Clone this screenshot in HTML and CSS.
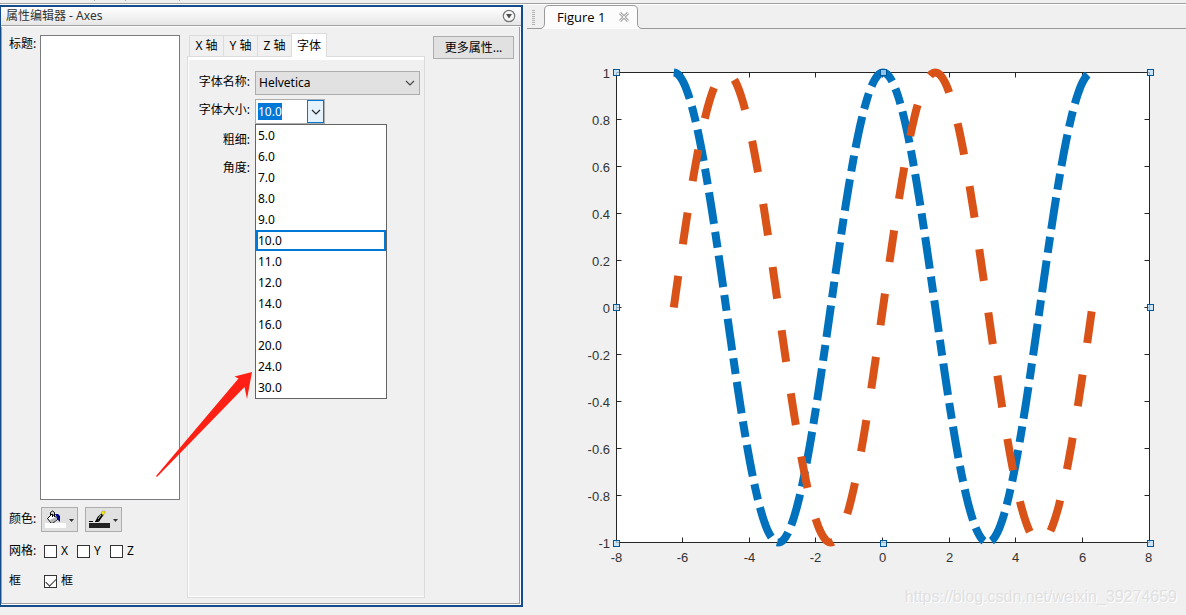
FILE: index.html
```html
<!DOCTYPE html>
<html lang="zh-CN">
<head>
<meta charset="utf-8">
<title>属性编辑器 - Axes</title>
<link rel="stylesheet" href="styles.css">
</head>
<body>
<div class="toolbar-edge"><i></i><i></i><i></i></div>
<main class="workspace">
  <section class="editor">
    <header class="editor-title">
      <h1>属性编辑器 - Axes</h1>
      <button class="round-button" aria-label="菜单">
        <svg width="14" height="14" viewBox="0 0 14 14"><circle cx="7" cy="7" r="5.7" fill="#f6f6f6" stroke="#777" stroke-width="1.2"/><path d="M4 5h6L7 9.5z" fill="#505050"/></svg>
      </button>
    </header>
    <div class="editor-body">
      <div class="general">
        <label class="caption" for="title-text">标题:</label>
        <textarea id="title-text" class="title-text"></textarea>
        <span class="caption row-label">颜色:</span>
        <div class="colour-buttons">
          <button class="colour-button" aria-label="背景颜色">
            <svg width="35" height="23" viewBox="0 0 35 23">
              <path d="M5.500 10.500L10 6l6 5-5 4H9z" fill="#fff" stroke="#000"/>
              <path d="M8 12l6-3 1 2-4 3.500H9z" fill="#b5b5b5"/>
              <path d="M8.500 8V4.500l2-1.500 2 1.500V9M10.500 6v3" fill="none" stroke="#000"/>
              <path d="M13 6h3l2 2v5.500h-1l-2-4z" fill="#00008b"/>
              <path d="M3 15h21v5H3z" fill="#fff"/><path d="M27 11h5l-2.500 3z" fill="#333"/>
            </svg>
          </button>
          <button class="colour-button" aria-label="线条颜色">
            <svg width="35" height="23" viewBox="0 0 35 23">
              <path d="M3 13.500h4M9 13.500h3l2-1" fill="none" stroke="#000"/>
              <path d="M9.500 13l2-4L16 5l2 1.500-4 5.500-3 1.500z" fill="#000"/><path d="M12 11l3-4" stroke="#fff" stroke-width=".8"/>
              <path d="M15 5l1.500-2H19v2l-2 2.500z" fill="#f3ea10" stroke="#777" stroke-width=".4"/>
              <path d="M3 15h21v5H3z" fill="#222"/><path d="M27 11h5l-2.500 3z" fill="#333"/>
            </svg>
          </button>
        </div>
        <span class="caption row-label">网格:</span>
        <div class="checks">
          <label><input type="checkbox">X</label>
          <label><input type="checkbox">Y</label>
          <label><input type="checkbox">Z</label>
        </div>
        <span class="caption row-label">框</span>
        <div class="checks">
          <label><input type="checkbox" checked>框</label>
        </div>
      </div>

      <div class="tabs">
        <div class="tab-row" role="tablist">
          <button role="tab">X 轴</button><button role="tab">Y 轴</button><button role="tab">Z 轴</button><button role="tab" class="active" aria-selected="true">字体</button>
        </div>
        <div class="tab-panel" role="tabpanel">
          <div class="form">
            <label for="font-name">字体名称:</label>
            <div class="select-box">
              <select id="font-name"><option>Helvetica</option></select>
              <svg width="10" height="6" viewBox="0 0 10 6"><path d="M1 1l4 4 4-4" fill="none" stroke="#444" stroke-width="1.1"/></svg>
            </div>
            <label for="font-size">字体大小:</label>
            <div class="combo">
              <div class="combo-field"><input id="font-size" type="text" value="10.0"></div>
              <button aria-label="展开"><svg width="10" height="6" viewBox="0 0 10 6"><path d="M1 1l4 4 4-4" fill="none" stroke="#222" stroke-width="1.1"/></svg></button>
              <ul class="size-list" role="listbox" aria-label="字体大小">
                <li role="option">5.0</li><li role="option">6.0</li><li role="option">7.0</li><li role="option">8.0</li><li role="option">9.0</li>
                <li role="option" class="current" aria-selected="true">10.0</li>
                <li role="option">11.0</li><li role="option">12.0</li><li role="option">14.0</li><li role="option">16.0</li><li role="option">20.0</li><li role="option">24.0</li><li role="option">30.0</li>
              </ul>
            </div>
            <span>粗细:</span><span></span>
            <span>角度:</span><span></span>
          </div>
        </div>
      </div>
      <button class="more">更多属性...</button>
    </div>
    <svg class="arrow" width="98" height="106" viewBox="0 0 98 106"><path d="M97 1L79.500 5.500l4 2L1 105l1 1L89.500 16l2.500 12z" fill="#ff2015"/></svg>
  </section>

  <section class="dock">
    <div class="dock-tabs">
      <svg class="grip" width="5" height="17" viewBox="0 0 5 17"><path d="M2.500 1v16" stroke="#b2b2b2" stroke-width="3" stroke-dasharray="1 1"/></svg>
      <div class="figure-tab">
        <svg class="tab-shape" width="102" height="24" viewBox="0 0 102 24"><path d="M0 23.500Q4.500 23.500 4.500 18V5Q4.500.5 9 .5H93Q97.500.5 97.500 5V18Q97.500 23.500 102 23.500V24H0z" fill="#fcfcfd"/><path d="M0 23.500Q4.500 23.500 4.500 18V5Q4.500.5 9 .5H93Q97.500.5 97.500 5V18Q97.500 23.500 102 23.500" fill="none" stroke="#999"/></svg>
        <span>Figure 1</span>
        <button aria-label="关闭"><svg width="10" height="10" viewBox="0 0 10 10"><path d="M1 1l8 8M9 1L1 9" stroke="#a6a6a6" stroke-width="3"/><path d="M1 1l8 8M9 1L1 9" stroke="#f3f3f3" stroke-width="1"/></svg></button>
      </div>
    </div>
    <svg class="chart" viewBox="527 29 659 578" role="img" aria-label="Figure 1">
      <path d="M616.500 72.500H1149.500V542.500H616.500z" fill="#fff"/>
      <path id="ticks" stroke="#262626" fill="none"/>
      <path id="cosine" fill="none" stroke="#0072bd" stroke-width="8" stroke-dasharray="31.92 7.98 15.96 7.98"/>
      <path id="sine" fill="none" stroke="#d95319" stroke-width="8" stroke-dasharray="31.94 31.94"/>
      <g id="handles" fill="#bfe2f8" fill-opacity=".75" stroke="#00589c"></g>
      <g id="x-labels" class="axis-label" text-anchor="middle"></g>
      <g id="y-labels" class="axis-label" text-anchor="end"></g>
    </svg>
    <p class="watermark">https://blog.csdn.net/weixin_39274659</p>
  </section>
</main>
<script src="chart.js"></script>
</body>
</html>
```
FILE: styles.css
```css
* { box-sizing: border-box; }
body {
  margin: 0;
  min-height: 100vh;
  display: flex;
  flex-direction: column;
  background: #f0f0f0;
  color: #000;
  font: 12px/16px "Noto Sans", "Noto Sans CJK SC", sans-serif;
}
button, input, select, textarea { font: inherit; color: inherit; margin: 0; padding: 0; }
svg { display: block; }

.toolbar-edge {
  height: 5px;
  display: flex;
  padding-left: 94px;
  gap: 30px;
  border-bottom: 1px solid #fff;
  box-shadow: inset 0 -1px #a0a0a0;
}
.toolbar-edge i { width: 1px; height: 1px; background: #aaa; }
.toolbar-edge i:last-child { margin-left: 23px; }

.workspace { flex: 1; display: flex; gap: 4px; padding-bottom: 8px; }
.editor {
  position: relative;
  width: 523px;
  flex: none;
  display: flex;
  flex-direction: column;
  border: 2px solid #134b8b;
  border-left-width: 1px;
  background: #fff;
}
.editor-title {
  height: 19px;
  display: flex;
  align-items: center;
  justify-content: space-between;
  padding: 0 5px;
  background: linear-gradient(#fff, #e6e6e6);
  border-bottom: 1px solid #a0a0a0;
}
.editor-title h1 { margin: 0; font-size: 12px; font-weight: 400; color: #333; }
.round-button { border: 0; background: none; }
.editor-body {
  flex: 1;
  display: flex;
  align-items: stretch;
  gap: 7px;
  margin: 1px 1px 1px 0;
  padding: 7px 5px 5px 7px;
  border: 1px solid #a0a0a0;
  border-top: 0;
  background: #f0f0f0;
}

.general {
  width: 171px;
  display: grid;
  grid-template-columns: 31px 1fr;
  grid-template-rows: 1fr 38px 26px 34px;
  padding-top: 1px;
}
.caption { white-space: nowrap; }
label.caption { line-height: 18px; }
.row-label { align-self: center; }
.title-text {
  width: 140px;
  height: 100%;
  resize: none;
  border: 1px solid #7a7a7f;
  border-radius: 0;
  background: #fff;
}
.colour-buttons { display: flex; align-items: center; gap: 7px; padding-left: 1px; }
.colour-button {
  width: 37px;
  height: 25px;
  border: 1px solid #adadad;
  background: #e1e1e1;
}
.checks { display: flex; align-items: center; padding-left: 4px; }
.checks label { display: flex; align-items: center; gap: 4px; width: 33px; white-space: nowrap; }
.checks input {
  appearance: none;
  flex: none;
  width: 13px;
  height: 13px;
  border: 1px solid #333;
  background: #fff;
}
.checks input:checked::after {
  content: "";
  display: block;
  width: 9px;
  height: 5px;
  margin: 2px 1px;
  border: solid #333;
  border-width: 0 0 1px 1px;
  transform: rotate(-45deg);
}

.tabs { width: 238px; display: flex; flex-direction: column; }
.tab-row { display: flex; align-items: flex-end; height: 22px; padding-left: 2px; }
.tab-row button {
  width: 34px;
  height: 21px;
  border: solid #dcdcdc;
  border-width: 1px 0 0 1px;
  background: #f0f0f0;
  white-space: nowrap;
}
.tab-row .active {
  width: 36px;
  height: 24px;
  margin-bottom: -1px;
  border-right-width: 1px;
  background: #fff;
  z-index: 1;
}
.tab-panel {
  flex: 1;
  border: 1px solid #dcdcdc;
  box-shadow: inset 1px 3px #fff, inset 0 -1px #fff;
}
.form {
  display: grid;
  grid-template-columns: 62px 1fr;
  grid-template-rows: 24px 25px 24px 24px;
  row-gap: 4px;
  column-gap: 5px;
  padding: 14px 4px 0 0;
  text-align: right;
}
.form > label { line-height: 22px; white-space: nowrap; }
.form > span { line-height: 24px; }
.select-box { display: grid; height: 24px; align-items: center; }
.select-box select {
  grid-area: 1 / 1;
  appearance: none;
  width: 100%;
  height: 24px;
  padding: 0 3px;
  border: 1px solid #adadad;
  border-radius: 0;
  background: #e1e1e1;
}
.select-box svg { grid-area: 1 / 1; justify-self: end; margin-right: 5px; pointer-events: none; }
.combo {
  position: relative;
  display: flex;
  width: 70px;
  height: 25px;
  border: 1px solid #adadad;
  background: #fff;
}
.combo-field { flex: 1; padding: 3px 2px; }
.combo-field input {
  display: block;
  width: 24px;
  height: 17px;
  border: 0;
  background: #0078d7;
  color: #fff;
}
.combo button {
  width: 17px;
  display: grid;
  place-items: center;
  border: 1px solid #0078d7;
  background: #e5f1fb;
}
.size-list {
  position: absolute;
  top: 24px;
  left: -1px;
  width: 132px;
  margin: 0;
  padding: 0;
  list-style: none;
  border: 1px solid #646464;
  background: #fff;
  text-align: left;
}
.size-list li { height: 21px; padding: 0 2px; line-height: 21px; }
.size-list .current { box-shadow: inset 0 0 0 2px #0078d7; }
.more {
  width: 81px;
  height: 23px;
  margin: 2px 0 0 1px;
  border: 1px solid #adadad;
  background: #e1e1e1;
  white-space: nowrap;
}
.arrow { position: absolute; left: 154px; top: 364px; }

.dock { position: relative; flex: 1; min-width: 0; }
.dock-tabs {
  display: flex;
  height: 24px;
  padding-left: 4px;
  gap: 8px;
  box-shadow: inset 0 -1px #999;
}
.grip { margin-top: 4px; }
.figure-tab {
  position: relative;
  width: 102px;
  height: 24px;
  margin-left: -4px;
  display: flex;
  align-items: center;
  gap: 14px;
  padding-left: 17px;
  font-size: 13px;
  font-family: "Open Sans", "Noto Sans", sans-serif;
}
.tab-shape { position: absolute; inset: 0; }
.figure-tab span, .figure-tab button { position: relative; white-space: nowrap; }
.figure-tab button { border: 0; background: none; }
.chart { width: 100%; }
.axis-label { font: 13px "Liberation Sans", Arial, sans-serif; fill: #333; }
.watermark {
  position: absolute;
  right: 9px;
  bottom: 0;
  margin: 0;
  font: 16px/20px "Liberation Sans", Arial, sans-serif;
  color: #e0e0e0;
  text-shadow: 1px 1px #fff;
}
```
FILE: chart.js
```javascript
const NS = "http://www.w3.org/2000/svg";
const px = x => 883 + x * 33.3;
const py = y => 307.5 - y * 235;
const el = id => document.getElementById(id);

function curve(fn) {
  const points = [];
  for (let i = 0; i <= 400; i++) {
    const x = -2 * Math.PI + i * Math.PI / 100;
    points.push(px(x).toFixed(2) + " " + py(fn(x)).toFixed(2));
  }
  return "M" + points.join("L");
}
function label(group, x, y, text) {
  const node = document.createElementNS(NS, "text");
  node.setAttribute("x", x);
  node.setAttribute("y", y);
  node.textContent = text;
  el(group).appendChild(node);
}

el("cosine").setAttribute("d", curve(Math.cos));
el("sine").setAttribute("d", curve(Math.sin));

let ticks = "M616.5 72.5H1149.5V542.5H616.5z";
for (let v = -8; v <= 8; v += 2) {
  const x = Math.round(px(v)) - 0.5;
  if (Math.abs(v) < 8) ticks += `M${x} 72.5v5M${x} 542.5v-5`;
  label("x-labels", x, 562, v);
}
for (let i = -5; i <= 5; i++) {
  const y = 307.5 - i * 47;
  ticks += `M616.5 ${y}h5M1149.5 ${y}h-5`;
  label("y-labels", 610, y + 5, i / 5);
}
el("ticks").setAttribute("d", ticks);

for (const [x, y] of [[616, 72], [883, 72], [1150, 72], [616, 307], [1150, 307], [616, 543], [883, 543], [1150, 543]]) {
  const box = document.createElementNS(NS, "rect");
  box.setAttribute("x", x - 2.5);
  box.setAttribute("y", y - 2.5);
  box.setAttribute("width", 6);
  box.setAttribute("height", 6);
  el("handles").appendChild(box);
}
```
